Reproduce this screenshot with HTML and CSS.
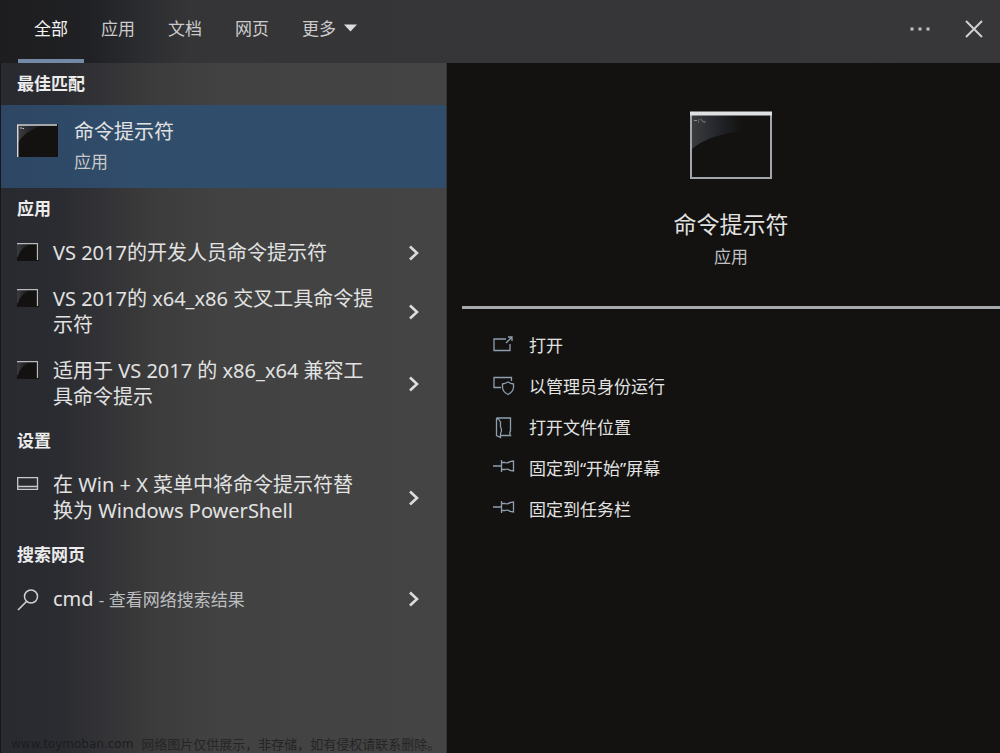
FILE: index.html
```html
<!DOCTYPE html>
<html lang="zh-CN">
<head>
<meta charset="utf-8">
<title>搜索</title>
<meta name="viewport" content="width=device-width, initial-scale=1">
<link rel="stylesheet" href="styles.css">
</head>
<body>
<svg class="defs" width="0" height="0" aria-hidden="true">
  <defs>
    <linearGradient id="gloss" x1="0" y1="0" x2="1" y2="0">
      <stop offset="0" stop-color="#3c3c3e"/>
      <stop offset="0.5" stop-color="#23262c"/>
      <stop offset="1" stop-color="#131210"/>
    </linearGradient>
    <symbol id="chevron" viewBox="0 0 12 16"><path d="M2 1.500L9 8L2 14.500" fill="none" stroke="#dcdcdc" stroke-width="2.600"/></symbol>
    <symbol id="console" viewBox="0 0 22 18">
      <rect width="22" height="18" fill="#131210"/>
      <path d="M0 1H14Q3 5 1 14H0Z" fill="url(#gloss)"/>
      <path d="M0 0.700H20.500V17" fill="none" stroke="#b9babb" stroke-width="1.300"/>
    </symbol>
    <symbol id="pin" viewBox="0 0 22 16"><path d="M0 8H8.500M8.500 2V14M8.500 4.500H12Q15 5.500 17 3.500L20.500 3V13L17 12.500Q15 10.500 12 11.500H8.500" fill="none" stroke="#8f9fb0" stroke-width="1.300"/></symbol>
  </defs>
</svg>
<div class="search">
  <header class="topbar">
    <nav class="tabs">
      <button class="tab tab-active">全部</button>
      <button class="tab">应用</button>
      <button class="tab">文档</button>
      <button class="tab">网页</button>
      <button class="tab">更多<svg width="13" height="8" viewBox="0 0 13 8"><path d="M0 0.500H13L6.500 7.500Z" fill="#dcdcdc"/></svg></button>
    </nav>
    <div class="window-actions">
      <button class="icon-button" aria-label="选项"><svg width="20" height="4" viewBox="0 0 20 4"><path d="M0.500 0.500h3v3h-3zM8.500 0.500h3v3h-3zM16.500 0.500h3v3h-3z" fill="#c4c4c4"/></svg></button>
      <button class="icon-button" aria-label="关闭"><svg width="18" height="18" viewBox="0 0 18 18"><path d="M1 1L17 17M17 1L1 17" stroke="#d0d0d0" stroke-width="2"/></svg></button>
    </div>
  </header>
  <main class="panes">
    <section class="results">
      <h2 class="group">最佳匹配</h2>
      <button class="best">
        <svg width="42" height="34" viewBox="0 0 42 34"><rect width="41" height="33" fill="#131210"/><path d="M1 1H27Q6 8 1 19Z" fill="url(#gloss)"/><path d="M0.700 33V1H40" fill="none" stroke="#d5d6d8" stroke-width="1.500"/><path d="M3 4H5M5.500 4.500H7" stroke="#c8c8c8" stroke-width="1"/></svg>
        <span class="best-text"><span class="best-title">命令提示符</span><span class="best-kind">应用</span></span>
      </button>
      <h2 class="group">应用</h2>
      <button class="item"><svg class="item-icon" width="22" height="18"><use href="#console"/></svg><span class="label">VS 2017的开发人员命令提示符</span><svg class="chevron" width="12" height="16"><use href="#chevron"/></svg></button>
      <button class="item"><svg class="item-icon" width="22" height="18"><use href="#console"/></svg><span class="label">VS 2017的 x64_x86 交叉工具命令提<br>示符</span><svg class="chevron" width="12" height="16"><use href="#chevron"/></svg></button>
      <button class="item"><svg class="item-icon" width="22" height="18"><use href="#console"/></svg><span class="label">适用于 VS 2017 的 x86_x64 兼容工<br>具命令提示</span><svg class="chevron" width="12" height="16"><use href="#chevron"/></svg></button>
      <h2 class="group">设置</h2>
      <button class="item"><svg class="item-icon" width="22" height="18" viewBox="0 0 22 18"><path d="M0.700 2.700H20.500V14.300H0.700ZM0.700 11.500H20.500" fill="none" stroke="#c8c9ca" stroke-width="1.300"/></svg><span class="label">在 Win + X 菜单中将命令提示符替<br>换为 Windows PowerShell</span><svg class="chevron" width="12" height="16"><use href="#chevron"/></svg></button>
      <h2 class="group">搜索网页</h2>
      <button class="item"><svg class="item-icon" width="22" height="22" viewBox="0 0 22 22"><circle cx="14" cy="7.500" r="6.500" fill="none" stroke="#cfd0d0" stroke-width="1.500"/><path d="M9.500 12.500L1 21" stroke="#cfd0d0" stroke-width="1.600"/></svg><span class="label">cmd <span class="hint">- 查看网络搜索结果</span></span><svg class="chevron" width="12" height="16"><use href="#chevron"/></svg></button>
      <p class="notice"><span class="notice-site">www.toymoban.com</span><span>网络图片仅供展示，非存储，如有侵权请联系删除。</span></p>
    </section>
    <section class="details">
      <div class="hero">
        <svg width="82" height="68" viewBox="0 0 82 68"><rect width="82" height="68" fill="#131210"/><path d="M2 4H52V20Q18 24 2 38Z" fill="url(#gloss)"/><path d="M1 1V67H81V1" fill="none" stroke="#a3a6aa" stroke-width="2"/><path d="M0 2.500H82" stroke="#dfe1e3" stroke-width="4"/><path d="M4 9.500h3M8.500 8.500v1M8.500 10.500v1M10.500 8l3 3h2" fill="none" stroke="#8d8e90" stroke-width="1"/></svg>
        <h1 class="hero-title">命令提示符</h1>
        <p class="hero-kind">应用</p>
      </div>
      <div class="actions">
        <button class="action"><svg width="22" height="22" viewBox="0 0 22 22"><path d="M13 4H1V15.500H17V9M13 8L18.500 2.500M15 2H19V6" fill="none" stroke="#8f9fb0" stroke-width="1.300"/></svg>打开</button>
        <button class="action"><svg width="22" height="22" viewBox="0 0 22 22"><path d="M8 11.500H1V1.500H18.500V5M15 6Q12.500 7.500 9.500 8V11.500Q10 16 15 18.500Q20 16 20.500 11.500V8Q17.500 7.500 15 6Z" fill="none" stroke="#8f9fb0" stroke-width="1.300"/></svg>以管理员身份运行</button>
        <button class="action"><svg width="22" height="22" viewBox="0 0 22 22"><path d="M3.500 1H17.500V14Q16 15.500 17.500 18.500H8M3.500 1V18.500L7.500 20.500V16.500Q9.500 13 7.500 10V5Q6.500 2.500 3.500 1" fill="none" stroke="#8f9fb0" stroke-width="1.300"/></svg>打开文件位置</button>
        <button class="action"><svg width="22" height="22" viewBox="0 0 22 22"><use href="#pin" width="22" height="16"/></svg>固定到“开始”屏幕</button>
        <button class="action"><svg width="22" height="22" viewBox="0 0 22 22"><use href="#pin" width="22" height="16"/></svg>固定到任务栏</button>
      </div>
    </section>
  </main>
</div>
</body>
</html>
```
FILE: styles.css
```css
* { box-sizing: border-box; }
body {
  margin: 0;
  background: #131210;
  color: #e2e2e2;
  font-family: "Noto Sans", "Noto Sans CJK SC", sans-serif;
}
h1, h2, p { margin: 0; font-weight: 400; }
button {
  margin: 0;
  padding: 0;
  border: 0;
  background: none;
  color: inherit;
  font: inherit;
  text-align: left;
}
svg { display: block; flex: none; }
.defs { position: absolute; }
.search { display: flex; flex-direction: column; min-height: 100vh; }

.topbar {
  display: flex;
  justify-content: space-between;
  height: 63px;
  padding: 0 17px 0 18px;
  background: linear-gradient(90deg, #1d1d1f 0, #202124 90px, #2b2c30 140px, #353537 190px, #373739 100%);
}
.tabs { display: flex; gap: 1px; }
.tab {
  display: flex;
  align-items: center;
  gap: 8px;
  height: 63px;
  padding: 0 16px 8px;
  font-size: 17px;
  color: #cbcbcb;
}
.tab-active {
  padding-bottom: 4px;
  border-bottom: 4px solid #7489a8;
  color: #f2f2f2;
}
.window-actions { display: flex; align-items: center; gap: 35px; padding-bottom: 5px; }
.icon-button { display: grid; place-items: center; }

.panes { display: grid; grid-template-columns: 447px 1fr; flex: 1; }
.results {
  display: flex;
  flex-direction: column;
  border-left: 1px solid #17171a;
  border-right: 1px solid #343535;
  background: linear-gradient(90deg, #292a2f 0, #2b2c31 60px, #343437 110px, #3c3c3c 155px, #414241 220px, #434443 100%);
}
.group {
  height: 42px;
  padding-left: 16px;
  font-size: 17px;
  line-height: 42px;
  font-weight: 700;
  color: #ececec;
}
.best {
  display: flex;
  gap: 15px;
  height: 83px;
  padding: 14px 16px;
  background: linear-gradient(90deg, #2d4663 0, #304d6b 140px, #304e6c 100%);
}
.best svg { margin-top: 5px; }
.best-text { display: flex; flex-direction: column; gap: 5px; }
.best-title { font-size: 20px; line-height: 26px; }
.best-kind { font-size: 17px; line-height: 24px; color: #c9c9c9; }
.item {
  display: flex;
  align-items: center;
  padding: 10px 26px 10px 16px;
  font-size: 20px;
  line-height: 26px;
}
.item-icon { align-self: flex-start; margin: 3px 14px 0 0; }
.label { flex: 1; white-space: nowrap; }
.hint { font-size: 17px; line-height: 24px; color: #bdbfc1; }
.notice {
  display: flex;
  gap: 8px;
  margin-top: auto;
  padding-left: 10px;
  font-size: 13px;
  line-height: 18px;
  color: #252527;
  white-space: nowrap;
}
.notice-site {
  font-family: "DejaVu Sans", sans-serif;
  font-size: 12px;
  color: #1c1c20;
}

.details { display: flex; flex-direction: column; padding-left: 15px; }
.hero {
  display: flex;
  flex-direction: column;
  align-items: center;
  padding: 48px 0 37px;
  border-bottom: 3px solid #a5a9ac;
}
.hero-title { margin-top: 28px; font-size: 23px; line-height: 34px; }
.hero-kind { margin-top: 4px; font-size: 17px; line-height: 24px; color: #bfc1c4; }
.actions { display: flex; flex-direction: column; padding: 16px 0 0 31px; }
.action {
  display: flex;
  align-items: center;
  gap: 14px;
  height: 41px;
  font-size: 17px;
  line-height: 24px;
}
```
